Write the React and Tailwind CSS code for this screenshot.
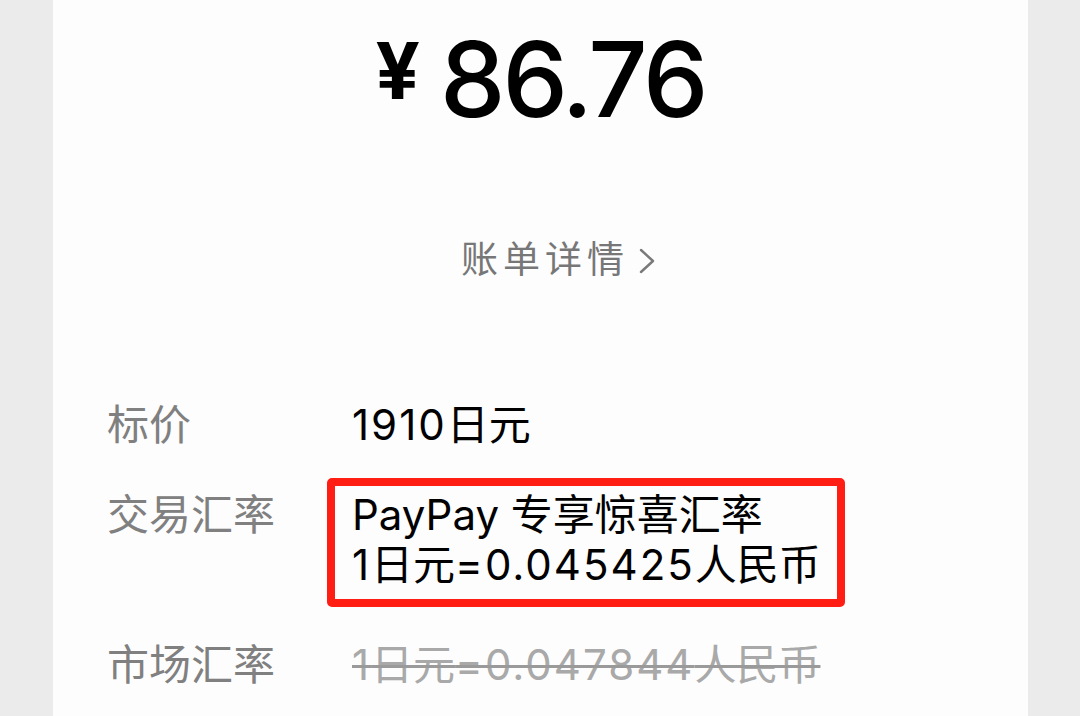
export default function App() {
  const font = { fontFamily: 'Inter, "Noto Sans CJK SC", sans-serif' };
  return (
    <div className="w-[1080px] h-[716px] bg-[#ebebeb] flex justify-center overflow-hidden" style={font}>
      <div className="w-[975px] h-full bg-[#fdfdfd] ml-[1px] flex flex-col">
        <div className="flex items-start justify-center pt-[27px] text-black">
          <span className="text-[78px] font-bold leading-none mt-[5px] mr-[20px]">¥</span>
          <span className="text-[104px] font-medium leading-none tracking-[-3px]">86.76</span>
        </div>
        <div className="flex justify-center items-center mt-[110px] pl-[36px] text-[#777777] text-[37px] leading-none tracking-[5px]">
          <span>账单详情</span>
          <svg className="ml-[9px] mt-[2px]" width="18" height="30" viewBox="0 0 18 30" fill="none">
            <path d="M3 4 L15 15 L3 26" stroke="#7a7a7a" strokeWidth="2.4" strokeLinecap="round" strokeLinejoin="round" />
          </svg>
        </div>
        <div className="flex flex-col pl-[54px] mt-[122px]">
          <div className="flex h-[50px]">
            <span className="w-[245px] text-[42px] text-[#808080] leading-[50px]">标价</span>
            <span className="text-[42px] text-black leading-[50px]"><span className="tracking-[2px]">1910</span>日元</span>
          </div>
          <div className="flex mt-[40px]">
            <span className="w-[245px] text-[42px] text-[#808080] leading-[50px]">交易汇率</span>
            <div className="relative text-[42px] text-black leading-[50px]">
              <div className="absolute -left-[25px] -top-[12px] -right-[24px] -bottom-[17px] border-[8px] border-[#ff1d14] rounded-[5px]"></div>
              <div>PayPay 专享惊喜汇率</div>
              <div><span className="tracking-[2px]">1</span>日元<span className="tracking-[2px]">=0.045425</span>人民币</div>
            </div>
          </div>
          <div className="flex h-[50px] mt-[50px]">
            <span className="w-[245px] text-[42px] text-[#808080] leading-[50px]">市场汇率</span>
            <span className="text-[42px] text-[#a9a9a9] leading-[50px] line-through decoration-[#9a9a9a] decoration-[3px]"><span className="tracking-[2px]">1</span>日元<span className="tracking-[2px]">=0.047844</span>人民币</span>
          </div>
        </div>
      </div>
    </div>
  );
}
